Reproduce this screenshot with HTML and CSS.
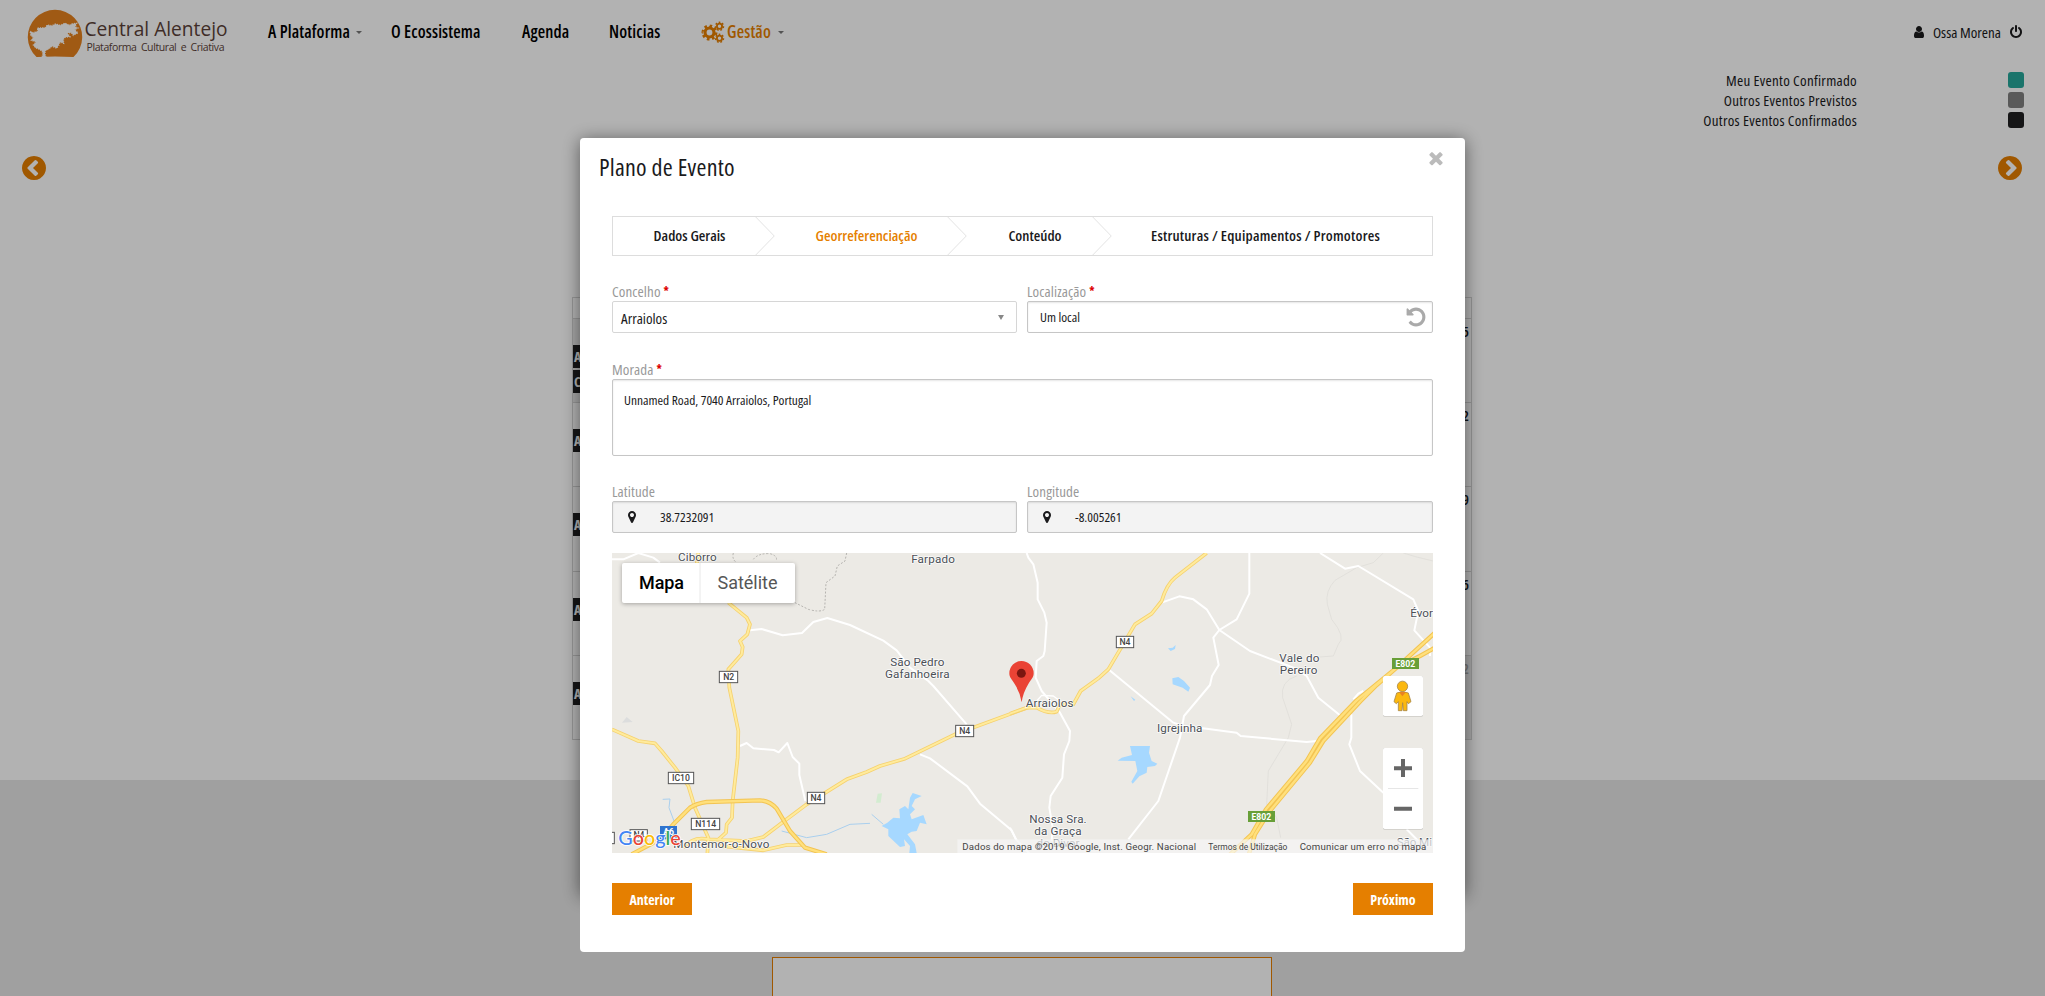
FILE: index.html
```html
<!DOCTYPE html>
<html lang="pt">
<head>
<meta charset="utf-8">
<title>Central Alentejo</title>
<link rel="stylesheet" href="styles.css">
</head>
<body>
<svg class="defs" width="0" height="0">
  <symbol id="user" viewBox="0 0 1792 1792"><path d="M1536 1399q0 109-62.500 187t-150.500 78h-854q-88 0-150.500-78t-62.500-187q0-85 8.500-160.500t31.500-152 58.500-131 94-89 134.500-34.500q131 128 313 128t313-128q76 0 134.500 34.500t94 89 58.500 131 31.500 152 8.500 160.500zm-256-887q0 159-112.500 271.500t-271.500 112.500-271.500-112.500-112.500-271.500 112.500-271.500 271.500-112.500 271.500 112.500 112.500 271.500z"/></symbol>
  <symbol id="power" viewBox="0 0 1792 1792"><path d="M1664 896q0 156-61 298t-164 245-245 164-298 61-298-61-245-164-164-245-61-298q0-182 80.500-343t226.500-270q43-32 95.500-25t83.500 50q32 42 24.500 94.500t-49.500 84.500q-98 74-151.500 181t-53.500 228q0 104 40.500 198.500t109.500 163.500 163.500 109.500 198.500 40.500 198.500-40.500 163.500-109.500 109.500-163.500 40.500-198.500q0-121-53.500-228t-151.500-181q-42-32-49.500-84.500t24.500-94.500q31-43 84-50t95 25q146 109 226.500 270t80.500 343zm-640-768v640q0 52-38 90t-90 38-90-38-38-90v-640q0-52 38-90t90-38 90 38 38 90z"/></symbol>
  <symbol id="times" viewBox="0 0 1792 1792"><path d="M1490 1322q0 40-28 68l-136 136q-28 28-68 28t-68-28l-294-294-294 294q-28 28-68 28t-68-28l-136-136q-28-28-28-68t28-68l294-294-294-294q-28-28-28-68t28-68l136-136q28-28 68-28t68 28l294 294 294-294q28-28 68-28t68 28l136 136q28 28 28 68t-28 68l-294 294 294 294q28 28 28 68z"/></symbol>
  <symbol id="marker" viewBox="0 0 1792 1792"><path d="M1152 640q0-106-75-181t-181-75-181 75-75 181 75 181 181 75 181-75 75-181zm256 0q0 109-33 179l-364 774q-16 33-47.500 52t-67.500 19-67.500-19-46.500-52l-365-774q-33-70-33-179 0-212 150-362t362-150 362 150 150 362z"/></symbol>
  <symbol id="undo" viewBox="0 0 1792 1792"><path d="M1664 896q0 156-61 298t-164 245-245 164-298 61q-172 0-327-72.500t-264-204.500q-7-10-6.500-22.500t8.500-20.500l137-138q10-9 25-9 16 2 23 12 73 95 179 147t225 52q104 0 198.500-40.500t163.500-109.500 109.500-163.500 40.500-198.500-40.500-198.500-109.500-163.500-163.500-109.500-198.500-40.500q-98 0-188 35.500t-160 101.500l137 138q31 30 14 69-17 40-59 40h-448q-26 0-45-19t-19-45v-448q0-42 40-59 39-17 69 14l130 129q107-101 244.500-156.500t284.500-55.500q156 0 298 61t245 164 164 245 61 298z"/></symbol>
  <symbol id="chevron" viewBox="128 128 1536 1536"><path d="M1037 1395l102-102q19-19 19-45t-19-45l-307-307 307-307q19-19 19-45t-19-45l-102-102q-19-19-45-19t-45 19l-454 454q-19 19-19 45t19 45l454 454q19 19 45 19t45-19zm627-499q0 209-103 385.500t-279.500 279.500-385.500 103-385.500-103-279.500-279.500-103-385.500 103-385.500 279.500-279.500 385.500-103 385.500 103 279.500 279.500 103 385.500z"/></symbol>
  <symbol id="step" viewBox="0 0 20 39"><path d="M.5 0L19.500 19.500L.5 39" fill="none" stroke="#e2e2e2"/></symbol>
</svg>

<div class="page">
  <header class="topbar">
    <svg class="logo" viewBox="0 0 210 56">
      <path class="logo-sun" d="M9.500 47A27.200 27.200 0 1 1 46.500 47Q28 46 9.500 47Z"/>
      <path class="logo-tree" transform="translate(-7 -10) scale(.33333)" d="M31 94L40 98L54 93L52 84L75 83L82 75L96 77L106 72L122 76L135 69L148 76L157 71L170 70L165 80L174 84L164 89L174 99L160 106L154 98L142 99L150 110L136 112L130 118L131 130L120 126L116 136L110 145L97 139L87 146L76 152Q73 160 78 171H66Q71 160 65 152L54 146L46 143L40 135L48 126L34 121L40 112L32 106Z"/>
      <text class="logo-name" x="57.500" y="26" textLength="143" lengthAdjust="spacingAndGlyphs">Central Alentejo</text>
      <text class="logo-tag" x="59.500" y="41" textLength="138" lengthAdjust="spacing">Plataforma Cultural e Criativa</text>
    </svg>
    <nav class="nav">
      <a class="n1">A Plataforma <i class="caret"></i></a>
      <a class="n2">O Ecossistema</a>
      <a class="n3">Agenda</a>
      <a class="n4">Noticias</a>
      <a class="n5">
        <svg class="cogs" viewBox="0 0 24 22">
          <circle cx="8.500" cy="11.500" r="4.500" stroke-width="3.200"/><circle cx="8.500" cy="11.500" r="6.700" stroke-width="2.600" pathLength="16" stroke-dasharray="1 1"/>
          <circle cx="18.500" cy="5.300" r="2.600" stroke-width="1.800"/><circle cx="18.500" cy="5.300" r="4" stroke-width="1.500" pathLength="14" stroke-dasharray="1 1"/>
          <circle cx="18.500" cy="17.300" r="2.600" stroke-width="1.800"/><circle cx="18.500" cy="17.300" r="4" stroke-width="1.500" pathLength="14" stroke-dasharray="1 1"/>
        </svg><span>Gestão</span><i class="caret"></i></a>
    </nav>
    <div class="account">
      <svg class="icon14"><use href="#user"/></svg><span>Ossa Morena</span><svg class="icon14"><use href="#power"/></svg>
    </div>
  </header>
  <ul class="legend">
    <li><span>Meu Evento Confirmado</span><i class="mine"></i></li>
    <li><span>Outros Eventos Previstos</span><i class="planned"></i></li>
    <li><span>Outros Eventos Confirmados</span><i class="done"></i></li>
  </ul>
  <div class="pager">
    <svg><use href="#chevron"/></svg><svg class="flip"><use href="#chevron"/></svg>
  </div>
  <div class="calendar">
    <div class="head"></div>
    <div class="week out"><b class="day">5</b><span class="event">A</span><span class="event">C</span></div>
    <div class="week"><b class="day">2</b><span class="event">A</span></div>
    <div class="week"><b class="day">9</b><span class="event">A</span></div>
    <div class="week"><b class="day">6</b><span class="event">A</span></div>
    <div class="week next"><b class="day">2</b><span class="event">A</span></div>
  </div>
  <footer class="footer"><div class="footbox"></div></footer>
</div>

<div class="backdrop">
  <div class="dialog"><div class="modal">
    <div class="modal-head"><h1>Plano de Evento</h1><svg class="close"><use href="#times"/></svg></div>
    <ol class="steps">
      <li>Dados Gerais<svg><use href="#step"/></svg></li>
      <li class="active">Georreferenciação<svg><use href="#step"/></svg></li>
      <li>Conteúdo<svg><use href="#step"/></svg></li>
      <li>Estruturas / Equipamentos / Promotores</li>
    </ol>
    <div class="row">
      <div class="field half"><label>Concelho <em>*</em></label><div class="box select">Arraiolos<i></i></div></div>
      <div class="field"><label>Localização <em>*</em></label><div class="box input">Um local<svg class="undo"><use href="#undo"/></svg></div></div>
    </div>
    <div class="row">
      <div class="field"><label>Morada <em>*</em></label><div class="box area">Unnamed Road, 7040 Arraiolos, Portugal</div></div>
    </div>
    <div class="row coords">
      <div class="field half"><label>Latitude</label><div class="box readonly"><svg class="icon14"><use href="#marker"/></svg>38.7232091</div></div>
      <div class="field"><label>Longitude</label><div class="box readonly"><svg class="icon14"><use href="#marker"/></svg>-8.005261</div></div>
    </div>
    <svg class="map" viewBox="612 552 821 300">
      <rect class="land" x="612" y="552" width="821" height="300"/>
      <g transform="translate(600 540) scale(.33333)">
        <path class="path" d="M400 36Q395 55 410 65M460 55Q475 36 510 38Q535 45 528 60M740 36L735 60L712 75L705 105L678 125L674 205Q660 215 625 205L585 185"/>
        <path class="minor" d="M36 55L70 55L115 36L160 50L180 65M450 268L485 264L548 283L606 276L640 243L682 231L750 252L850 299L890 328L930 380L985 420L1000 435L1100 550M420 615L440 606L460 622L522 627L536 634L562 606L578 648L598 668L598 702L616 780M960 640L990 652L1102 736L1140 788L1235 868L1248 895L1300 950"/>
        <path class="water-line" d="M188 775L210 774L207 800L222 840M545 870L620 890L680 880L750 850L810 847M815 820L850 850"/>
        <path class="water" d="M862 845L880 830L900 832L898 805L915 795L925 805L930 770L938 756L965 765L945 775L935 795L945 805L930 820L935 835L970 822L980 850L960 845L950 870L935 872L922 880L945 910L950 936L928 936L930 915L912 895L915 915L900 918L865 885L865 865L845 855Z"/>
        <path class="park" d="M833 758L846 757L842 785L828 785Z"/>
        <path class="park dim" d="M66 545L80 528L98 543Z"/>
        <path class="case" d="M295 36L290 70M385 185L440 230L450 250L442 280L420 300L428 318L425 340L385 385L388 440L415 570L413 650L398 780L396 830L380 850L378 875L350 900M36 565L115 600L165 607L185 630L225 680L265 735L285 800L325 890L322 940M250 920Q280 885 325 895L440 900L490 888L560 835L620 790L740 715L800 693L840 675L915 653L1065 580L1290 497M360 915L490 928L560 912L610 912"/>
        <path class="core" d="M295 36L290 70M385 185L440 230L450 250L442 280L420 300L428 318L425 340L385 385L388 440L415 570L413 650L398 780L396 830L380 850L378 875L350 900M36 565L115 600L165 607L185 630L225 680L265 735L285 800L325 890L322 940M250 920Q280 885 325 895L440 900L490 888L560 835L620 790L740 715L800 693L840 675L915 653L1065 580L1290 497M360 915L490 928L560 912L610 912"/>
        <path class="case wide" d="M95 940L180 895L220 850L270 800Q290 787 320 783L480 778Q510 780 530 803L570 870L615 920L680 940"/>
        <path class="core wide" d="M95 940L180 895L220 850L270 800Q290 787 320 783L480 778Q510 780 530 803L570 870L615 920L680 940"/>
        <g class="shield"><rect x="358" y="391" width="55" height="34"/><rect x="1067" y="553" width="54" height="34"/><rect x="205" y="694" width="76" height="34"/><rect x="622" y="754" width="52" height="34"/><rect x="274" y="832" width="85" height="34"/><rect x="90" y="866" width="52" height="34"/><rect x="20" y="874" width="23" height="34"/></g>
        <g class="code"><text x="386" y="417">N2</text><text x="1094" y="579">N4</text><text x="243" y="720">IC10</text><text x="648" y="780">N4</text><text x="317" y="858">N114</text><text x="117" y="892">N4</text></g>
        <rect x="180" y="855" width="51" height="40" fill="#2f74cf"/><text class="code-w" x="206" y="882">A6</text>
        <g class="place"><text x="292" y="61" textLength="116">Ciborro</text><text x="999" y="67" textLength="131">Farpado</text><text x="952" y="376" textLength="162">São Pedro</text><text x="952" y="412" textLength="194">Gafanhoeira</text><text x="364" y="922" textLength="288">Montemor-o-Novo</text></g>
        <text class="google" x="55" y="911" textLength="187" lengthAdjust="spacingAndGlyphs"><tspan fill="#4285f4">G</tspan><tspan fill="#ea4335">o</tspan><tspan fill="#fbbc05">o</tspan><tspan fill="#4285f4">g</tspan><tspan fill="#34a853">l</tspan><tspan fill="#ea4335">e</tspan></text>
      </g>
      <g transform="translate(1010 540) scale(.33333)">
        <path class="track" d="M1120 36L1090 65L1040 80L975 118Q945 150 952 190L965 235Q1010 290 985 310L970 345L900 350M860 405Q810 420 818 470L845 550L835 590L805 640L775 690L770 790L800 830L812 890M1180 36L1220 48L1269 60"/>
        <path class="minor" d="M50 36L55 50L70 70L83 125V175L103 215L110 245L104 330L100 345L80 360L77 410L95 450L150 515L180 570L178 600L162 640L157 710L122 765L118 800L128 860L125 900M718 36L718 158L680 235L628 267L610 290L626 372L606 405L600 432L522 525L510 590L445 780L355 895M455 185L508 166L550 175L590 205L628 267L720 330L850 380L890 405L925 470L990 523M930 36L1005 83L1045 75L1210 175L1225 210L1213 268L1260 320V345M295 385L490 545L520 555L590 563L680 575L692 585L890 603L920 600M1024 520L1024 590L1018 610L1050 690L1120 755M1190 865L1225 900M1030 475L1045 458L1060 450M0 860L18 895"/>
        <path class="minor thin" d="M80 480L95 463L130 465L150 480L135 500"/>
        <path class="water" d="M474 322L488 320L497 312L495 324L482 330ZM487 412L505 408L522 420L540 440L535 452L518 440L488 430ZM362 466L376 476L372 480ZM360 615H420L417 635L425 660L442 668L435 675L412 678L410 695L388 706L368 728L364 722L382 690L376 660L323 659L335 650L366 642Z"/>
        <path class="case" d="M0 518L50 500L80 500Q115 520 140 512L150 490L190 490L212 450L265 412L295 385L375 250L425 218L455 180Q470 130 495 110L590 36"/>
        <path class="core" d="M0 518L50 500L80 500Q115 520 140 512L150 490L190 490L212 450L265 412L295 385L375 250L425 218L455 180Q470 130 495 110L590 36"/>
        <path class="case wide" d="M1275 275L1160 380L1040 478L930 592L890 660L768 805L725 880L650 950M1275 320L1230 345L1160 380L1100 432L1052 480L940 600L900 665L778 812L735 880L715 945"/>
        <path class="core wide" d="M1275 275L1160 380L1040 478L930 592L890 660L768 805L725 880L650 950M1275 320L1230 345L1160 380L1100 432L1052 480L940 600L900 665L778 812L735 880L715 945"/>
        <g class="shield"><rect x="319" y="286" width="52" height="34"/></g><g class="code"><text x="345" y="312">N4</text></g>
        <g fill="#689f38"><rect x="1146" y="351" width="81" height="33"/><rect x="714" y="810" width="81" height="33"/></g>
        <text class="code-w" x="1186" y="378">E802</text><text class="code-w" x="754" y="837">E802</text>
        <g class="place"><text x="119" y="499" textLength="143">Arraiolos</text><text x="509" y="574" textLength="136">Igrejinha</text><text x="868" y="364" textLength="120">Vale do</text><text x="866" y="399" textLength="113">Pereiro</text><text x="144" y="847" textLength="172">Nossa Sra.</text><text x="144" y="883" textLength="142">da Graça</text><text x="144" y="918">do Divor</text><text x="1244" y="229">Évora</text><text x="1213" y="914" textLength="106">São Mi</text></g>
        <path fill="#ea4335" d="M35 484Q31 455 14 429C5 415 -2 409 -2 397A36.500 37 0 0 1 71 397C71 409 64 415 55 429Q39 455 35 484Z"/><circle cx="34" cy="397" r="13.500" fill="#7b1610"/>
        <rect x="-158" y="895" width="1430" height="42" fill="#f5f5f5" fill-opacity=".72"/>
        <g class="legal"><text x="-143" y="926" textLength="701">Dados do mapa ©2019 Google, Inst. Geogr. Nacional</text><text x="595" y="926" textLength="237" lengthAdjust="spacingAndGlyphs">Termos de Utilização</text><text x="869" y="926" textLength="380">Comunicar um erro no mapa</text></g>
        <g class="control"><rect x="1119" y="405" width="120" height="120" rx="5"/><rect x="1119" y="621" width="120" height="243" rx="5"/></g>
        <path d="M1134 742.500H1225" stroke="#e6e6e6" stroke-width="3"/>
        <path d="M1152 681.500H1206M1179 654V708M1152 803.500H1206" stroke="#666" stroke-width="12"/>
        <g fill="#fbb80f" stroke="#a8884a" stroke-width="2.500"><path d="M1160 456Q1177 448 1195 456L1203 482L1195 488L1191 482V509H1180L1178 485L1176 509H1165V482L1159 488L1152 482Z"/><circle cx="1177.500" cy="436" r="15.500"/></g><path d="M1167 453H1188L1177 466Z" fill="#e88223"/>
      </g>
      <g class="control"><rect x="622" y="562" width="173" height="40" rx="2"/></g>
      <path d="M700 562V602" stroke="#e8e8e8"/>
      <text class="mode on" x="639" y="588" textLength="45">Mapa</text><text class="mode" x="717.500" y="588" textLength="60">Satélite</text>
    </svg>
    <div class="actions"><button>Anterior</button><button>Próximo</button></div>
  </div></div>
</div>
</body>
</html>
```
FILE: styles.css
```css
* { box-sizing: border-box; }
body { margin: 0; height: 996px; overflow: hidden; background: #fff; color: #1a1a1c; font: 500 15px/20px "Open Sans", sans-serif; font-stretch: 75%; }
ul, ol { margin: 0; padding: 0; list-style: none; }
svg { display: block; fill: currentColor; flex: none; }
.defs { position: absolute; }
.icon14 { width: 14px; height: 14px; }
.page { display: flex; flex-direction: column; height: 996px; }

.topbar { display: flex; height: 70px; padding: 10px 22px 0 27px; }
.logo { width: 210px; height: 56px; overflow: visible; }
.logo-sun { fill: #e6821e; }
.logo-tree { fill: #fff; stroke: #fff; stroke-width: 4; stroke-dasharray: 3 4; }
.logo-name { font: 400 20px "Open Sans", sans-serif; fill: #5b3f38; }
.logo-tag { font: 400 10.500px "Open Sans", sans-serif; word-spacing: 2px; fill: #5b3f38; }
.nav { display: flex; margin-left: 31px; height: 44px; align-items: center; font-size: 17px; font-weight: 600; letter-spacing: .15px; color: #000; }
.nav a { display: flex; align-items: center; white-space: nowrap; }
.n1 { width: 123px; gap: 6px; }
.n2 { width: 131px; }
.n3 { width: 87px; }
.n4 { width: 92px; }
.n5 { color: #e57f00; }
.n5 .caret { margin-left: 7px; }
.cogs { width: 24px; height: 22px; margin-right: 2px; fill: none; stroke: currentColor; }
.caret { border: 3px solid transparent; border-top-color: #777; border-bottom: 0; }
.account { display: flex; align-items: center; gap: 7px; height: 44px; margin-left: auto; }
.account span { margin-right: 1px; }

.legend { padding: 0 21px 0 0; letter-spacing: .28px; }
.legend li { display: flex; justify-content: flex-end; align-items: center; height: 20px; }
.legend i { width: 16px; height: 16px; margin-left: 151px; border-radius: 3px; }
.mine { background: #26a69a; }
.planned { background: #808080; }
.done { background: #1f1f20; }
.pager { display: flex; justify-content: space-between; padding: 26px 23px 0 22px; color: #e57f00; }
.pager svg { width: 24px; height: 24px; }
.flip { transform: scaleX(-1); }

.calendar { width: 900px; height: 443px; margin: 117px 0 0 572px; border: 1px solid #d6d6d6; }
.head { height: 20px; }
.week { height: 84.200px; border-top: 1px solid #d6d6d6; }
.out { background: linear-gradient(90deg, #ededed 128px, #fff 128px); }
.next { background: linear-gradient(90deg, #fff 640px, #ededed 640px); }
.day { display: block; height: 26px; padding: 2px 2px 0 0; text-align: right; font-weight: 600; }
.next .day { color: #aaa; }
.event { display: block; width: 126px; height: 23px; margin-bottom: 2px; padding-left: 1px; background: #1f1f20; color: #fff; font-size: 14px; font-weight: 700; line-height: 23px; }
.footer { flex: none; height: 216px; margin-top: 40px; padding-top: 177px; background: #e5e5e5; }
.footbox { width: 500px; height: 60px; margin-left: 772px; border: 1px solid #e57f00; background: #fff; }

.backdrop { position: fixed; inset: 0; display: flex; padding: 138px 0 0 580px; background: rgba(0, 0, 0, .3); }
.dialog { width: 885px; height: 757px; border-radius: 4px; box-shadow: 0 2px 18px rgba(0, 0, 0, .5); }
.modal { height: 814px; padding: 0 32px; border-radius: 4px; background: #fff; }
.modal-head { display: flex; justify-content: space-between; height: 78px; margin: 0 -12px; padding: 12px 0; }
h1 { margin: 0 0 0 -1px; padding-top: 3px; font-size: 24px; font-weight: 500; line-height: 28px; letter-spacing: .25px; }
.close { width: 20px; height: 20px; margin: -2px -1px 0 0; fill: #bbb; }
.steps { display: grid; grid-template-columns: 162px 192px 145px 1fr; height: 40px; border: 1px solid #ddd; font-weight: 600; line-height: 37px; }
.steps li { display: flex; justify-content: center; position: relative; padding-right: 9px; white-space: nowrap; }
.steps li:last-child { padding-right: 13px; letter-spacing: .2px; }
.steps svg { position: absolute; right: 0; top: 0; width: 20px; height: 38px; }
.steps .active { color: #e57f00; }
.row { display: flex; gap: 10px; padding-top: 25px; }
.row + .row { padding-top: 26px; }
.row.coords { padding-top: 25px; }
.field { flex: 1; }
.half { flex: 0 0 405px; }
label { display: block; height: 20px; color: #999; letter-spacing: .1px; }
em { position: relative; top: -1px; color: #d00; font-style: normal; font-size: 12px; font-weight: 700; line-height: 1; }
.box { display: flex; align-items: center; height: 32px; border: 1px solid #c6c6c6; border-radius: 2px; font-size: 13.400px; box-shadow: inset 0 1px 2px rgba(0, 0, 0, .1); }
.select { justify-content: space-between; padding: 1px 12px 0 8px; border-color: #d6d6d6; box-shadow: none; font-size: 15px; }
.select i { border: 3px solid transparent; border-top: 5px solid #888; border-bottom: 0; }
.input { justify-content: space-between; padding: 0 5px 0 12px; }
.undo { width: 22px; height: 22px; fill: #aaa; }
.area { align-items: flex-start; height: 77px; padding: 10px 11px; }
.readonly { padding-left: 12px; gap: 21px; background: #f3f3f3; }
.map { width: 821px; height: 300px; margin-top: 20px; font-family: Roboto, sans-serif; font-weight: 400; font-stretch: 100%; }
.land { fill: #eceae5; }
.minor, .track, .path, .water-line, .case, .core { fill: none; stroke-linejoin: round; }
.minor { stroke: #fff; stroke-width: 6; }
.minor.thin { stroke-width: 4; }
.track { stroke: #dcdbd7; stroke-width: 2; }
.path { stroke: #b5b3af; stroke-width: 3; stroke-dasharray: 6 5; }
.water { fill: #a6d8ff; }
.water-line { stroke: #a9cfee; stroke-width: 3; }
.park { fill: #d3ecd0; }
.park.dim { fill: #dcdddd; }
.case { stroke: #f5d16f; stroke-width: 11; }
.core { stroke: #ffeb9c; stroke-width: 6; }
.case.wide { stroke: #f3c452; stroke-width: 13; }
.core.wide { stroke: #ffe07c; stroke-width: 7; }
.shield { fill: #fff; stroke: #555; stroke-width: 3; }
.code, .code-w { font-size: 26px; font-weight: 500; text-anchor: middle; fill: #444; }
.code-w { fill: #fff; font-weight: 700; }
.place { font-size: 35px; text-anchor: middle; fill: #4c5057; stroke: #fff; stroke-width: 5; stroke-opacity: .8; paint-order: stroke; stroke-linejoin: round; }
.google { font: 500 60px Lato, sans-serif; stroke: #fff; stroke-width: 5; paint-order: stroke; }
.legal { font-size: 29px; fill: #444; }
.control { fill: #fff; filter: drop-shadow(0 1px 2px rgba(0, 0, 0, .3)); }
.mode { font-size: 18px; fill: #565656; }
.mode.on { font-weight: 500; fill: #000; }
.actions { display: flex; justify-content: space-between; padding-top: 30px; }
button { width: 80px; height: 32px; padding: 2px 0 0; border: 0; background: #e57f00; color: #fff; font: inherit; font-size: 14px; font-weight: 700; }
```
